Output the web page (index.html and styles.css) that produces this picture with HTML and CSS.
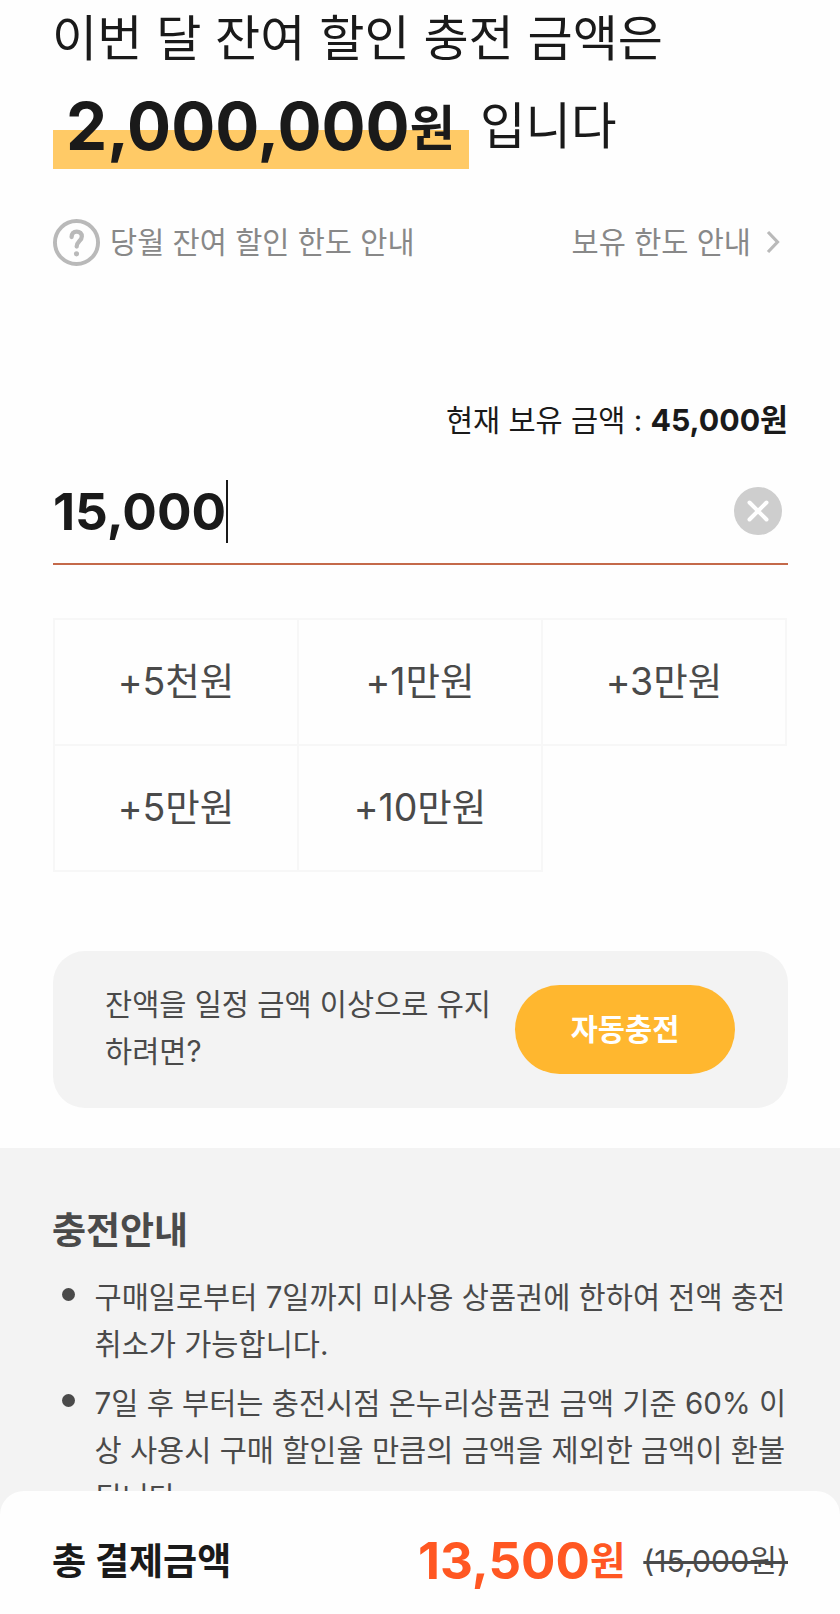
FILE: index.html
```html
<!DOCTYPE html>
<html lang="ko">
<head>
    <meta charset="UTF-8">
    <meta name="viewport" content="width=device-width, initial-scale=1.0">
    <title>충전하기</title>
    <link rel="stylesheet" href="styles.css">
</head>
<body>
    <main class="charge">
        <h1 class="limit-title">
            <span class="limit-line">이번 달 잔여 할인 충전 금액은</span>
            <span class="limit-line limit-second"><strong class="limit-amount">2,000,000<span class="won">원</span></strong><span class="limit-end">입니다</span></span>
        </h1>

        <div class="guide-row">
            <a class="guide-link">
                <svg class="icon-help" viewBox="0 0 48 48" fill="none">
                    <circle cx="24" cy="24" r="22" stroke="#b9b9b9" stroke-width="4"/>
                    <path d="M19 18.5c0-3.6 2-5.7 5.2-5.7s5.2 2 5.2 5c0 4.6-5.2 5-5.2 10.4" stroke="#b9b9b9" stroke-width="4.4" stroke-linecap="round"/>
                    <circle cx="24" cy="35.6" r="2.6" fill="#b9b9b9"/>
                </svg>
                <span class="guide-text">당월 잔여 할인 한도 안내</span>
            </a>
            <a class="guide-link">
                <span class="guide-text">보유 한도 안내</span>
                <svg class="icon-arrow" viewBox="0 0 14 24" fill="none">
                    <path d="M2 2l9.5 10L2 22" stroke="#b9b9b9" stroke-width="3.2"/>
                </svg>
            </a>
        </div>

        <p class="balance">현재 보유 금액 : <strong>45,000원</strong></p>

        <div class="amount-field">
            <span class="amount-value">15,000</span>
            <span class="caret"></span>
            <button class="clear" type="button" aria-label="지우기">
                <svg viewBox="0 0 48 48" fill="none">
                    <circle cx="24" cy="24" r="24" fill="#cecece"/>
                    <path d="M15.5 15.5l17 17M32.5 15.5l-17 17" stroke="#fff" stroke-width="4" stroke-linecap="round"/>
                </svg>
            </button>
        </div>

        <div class="amount-grid">
            <button type="button">+5천원</button>
            <button type="button">+1만원</button>
            <button type="button">+3만원</button>
            <button type="button">+5만원</button>
            <button type="button">+10만원</button>
        </div>

        <section class="auto-card">
            <p class="auto-text">잔액을 일정 금액 이상으로 유지<br>하려면?</p>
            <button class="auto-button" type="button">자동충전</button>
        </section>
    </main>

    <section class="notice">
        <h2>충전안내</h2>
        <ul>
            <li>구매일로부터 7일까지 미사용 상품권에 한하여 전액 충전<br>취소가 가능합니다.</li>
            <li>7일 후 부터는 충전시점 온누리상품권 금액 기준 60% 이<br>상 사용시 구매 할인율 만큼의 금액을 제외한 금액이 환불<br>됩니다.</li>
        </ul>
    </section>

    <footer class="total">
        <span class="total-label">총 결제금액</span>
        <span class="total-price">13,500<span class="won">원</span></span>
        <del class="total-origin">(15,000원)</del>
    </footer>
</body>
</html>
```
FILE: styles.css
```css
* {
    box-sizing: border-box;
}
body {
    margin: 0;
    height: 1614px;
    overflow: hidden;
    display: flex;
    flex-direction: column;
    font-family: Inter, "Noto Sans CJK KR", sans-serif;
    font-size: 29.5px;
    line-height: 47px;
    background-color: #fefefe;
    color: #1a1a1a;
    white-space: nowrap;
}
h1, h2, p, ul {
    margin: 0;
    padding: 0;
    font-weight: normal;
}
button {
    border: none;
    padding: 0;
    background: none;
    font-family: inherit;
    color: inherit;
}
svg {
    display: block;
}
.charge {
    height: 1148px;
    flex: none;
    padding: 0 52px 0 53px;
}
.limit-title {
    font-size: 49.1px;
    line-height: 77px;
}
.limit-line {
    display: block;
    height: 77px;
    margin-left: -1px;
}
.limit-second {
    display: flex;
    height: 92px;
    margin-left: 0;
    line-height: 99px;
}
.limit-amount {
    width: 416px;
    padding-left: 13px;
    font-size: 65.4px;
    font-weight: 700;
    background: linear-gradient(#ffca66, #ffca66) 0 53px / 100% 39px no-repeat;
}
.limit-amount .won {
    font-size: 49px;
    line-height: 1;
    vertical-align: 4px;
}
.limit-end {
    margin-left: 11px;
    font-size: 49.5px;
}
.guide-row {
    display: flex;
    justify-content: space-between;
    align-items: center;
    height: 48px;
    margin-top: 49px;
    padding-right: 8px;
    color: #888;
}
.guide-link {
    display: flex;
    align-items: center;
}
.icon-help {
    width: 47px;
    height: 47px;
    margin-right: 10px;
}
.icon-arrow {
    width: 14px;
    height: 24px;
    margin-left: 15px;
}
.balance {
    margin-top: 131px;
    text-align: right;
}
.balance strong {
    font-size: 30.3px;
    font-weight: 700;
}
.amount-field {
    display: flex;
    align-items: center;
    height: 101px;
    margin-top: 20px;
    padding: 0 6px 5px 0;
    border-bottom: 2px solid #c4694a;
}
.amount-value {
    font-size: 51.3px;
    font-weight: 700;
}
.caret {
    width: 2px;
    height: 63px;
    background-color: #1a1a1a;
}
.clear {
    width: 48px;
    height: 48px;
    margin-left: auto;
}
.amount-grid {
    display: grid;
    grid-template-columns: repeat(3, 244px);
    grid-auto-rows: 126px;
    margin-top: 53px;
}
.amount-grid button {
    width: 246px;
    height: 128px;
    padding-bottom: 8px;
    border: 2px solid #f7f7f7;
    font-size: 37.5px;
    color: #4a4a4a;
}
.auto-card {
    display: flex;
    align-items: center;
    height: 157px;
    margin-top: 81px;
    padding: 0 53px 0 52px;
    border-radius: 32px;
    background-color: #f3f3f3;
    color: #4a4a4a;
}
.auto-text {
    padding-bottom: 3px;
}
.auto-button {
    width: 220px;
    height: 89px;
    margin-left: auto;
    padding-bottom: 5px;
    border-radius: 45px;
    background-color: #ffb72f;
    color: #fff;
    font-size: 29.5px;
    font-weight: 700;
}
.notice {
    flex: 1;
    min-height: 0;
    padding: 58px 52px 0;
    background-color: #f3f3f3;
    color: #4a4a4a;
}
.notice h2 {
    font-size: 37px;
    font-weight: 700;
    line-height: 50px;
}
.notice ul {
    margin-top: 18px;
    list-style: none;
}
.notice li {
    position: relative;
    padding-left: 42.5px;
    margin-bottom: 12px;
}
.notice li::before {
    content: "";
    position: absolute;
    left: 10px;
    top: 14px;
    width: 13px;
    height: 13px;
    border-radius: 50%;
    background-color: #4a4a4a;
}
.total {
    position: fixed;
    left: 0;
    right: 0;
    bottom: 0;
    height: 123px;
    display: flex;
    padding: 46px 52px 0 52px;
    border-radius: 24px 24px 0 0;
    background-color: #fefefe;
}
.total-label {
    padding-top: 1px;
    font-size: 37.1px;
    font-weight: 700;
}
.total-price {
    margin-left: auto;
    font-size: 51px;
    font-weight: 700;
    color: #ff5722;
}
.total-price .won {
    font-size: 38.5px;
    line-height: 1;
    vertical-align: 4px;
}
.total-origin {
    margin-left: 18px;
    padding-top: 1px;
    font-size: 30.2px;
    color: #4a4a4a;
}
```
